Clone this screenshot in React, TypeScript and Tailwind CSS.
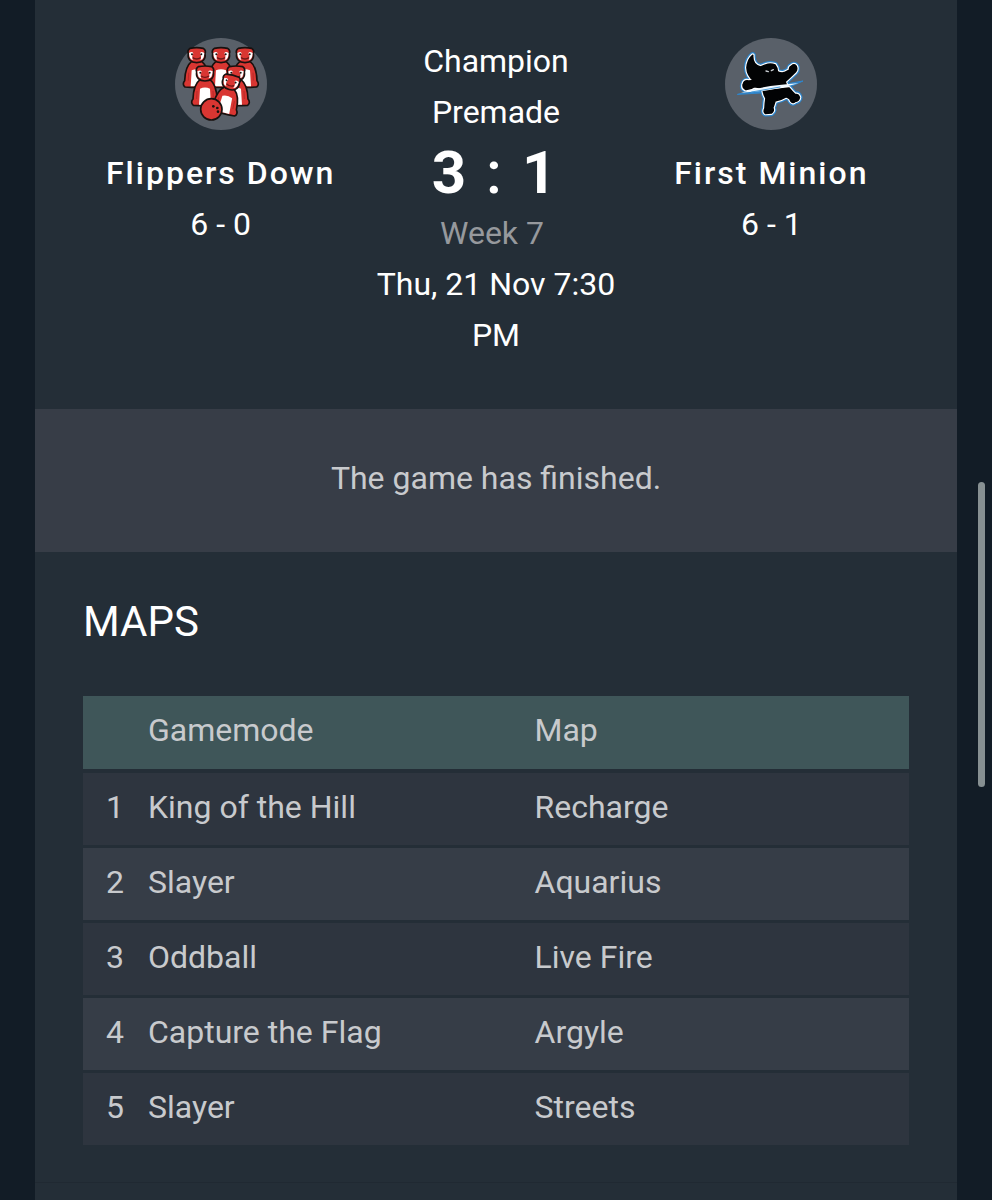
import type { ReactNode } from 'react';

interface Team {
  name: string;
  record: string;
  logo: ReactNode;
}

interface MapEntry {
  mode: string;
  map: string;
}

const maps: MapEntry[] = [
  { mode: 'King of the Hill', map: 'Recharge' },
  { mode: 'Slayer', map: 'Aquarius' },
  { mode: 'Oddball', map: 'Live Fire' },
  { mode: 'Capture the Flag', map: 'Argyle' },
  { mode: 'Slayer', map: 'Streets' },
];

// back row, middle row, then the front penguin
const penguins = [
  { x: 95, y: 54, tilt: 0 },
  { x: 168, y: 54, tilt: 0 },
  { x: 240, y: 54, tilt: 0 },
  { x: 213, y: 109, tilt: 0 },
  { x: 120, y: 109, tilt: 0 },
  { x: 203, y: 136, tilt: 14 },
];

function Penguin() {
  return (
    <g strokeLinejoin="round">
      <path
        d="M-15 40 C-28 50 -35 66 -36 98 C-41 104 -42 112 -35 117 L-17 118 L17 118 L35 117 C42 112 41 104 36 98 C35 66 28 50 15 40 Z"
        fill="#d93632"
        stroke="#18110f"
        strokeWidth="5"
      />
      <path d="M-15 67 Q0 60 15 67 L18 115 L-18 115 Z" fill="#ffffff" />
      <path d="M-24 74 L-25 98 M24 74 L25 98" stroke="#a92324" strokeWidth="2" fill="none" />
      <path
        d="M-20 1 Q0 -3 20 1 Q29 7 25 17 C28 34 17 44 0 44 C-17 44 -28 34 -25 17 Q-29 7 -20 1 Z"
        fill="#d93632"
        stroke="#18110f"
        strokeWidth="5"
      />
      <path d="M-23 15 Q-13 9 -10 16 Q-16 25 -11 36 Q-22 36 -23 15 Z" fill="#ffffff" />
      <path d="M23 15 Q13 9 10 16 Q16 25 11 36 Q22 36 23 15 Z" fill="#ffffff" />
      <circle cx="-14" cy="19" r="3" fill="#18110f" />
      <circle cx="14" cy="19" r="3" fill="#18110f" />
      <path d="M-12 29 Q0 37 12 29" stroke="#6d1717" strokeWidth="4" fill="none" />
    </g>
  );
}

function FlippersLogo() {
  return (
    <svg viewBox="30 24 276 276" className="size-23" role="img" aria-label="Flippers Down logo">
      <circle cx="168" cy="162" r="138" fill="#596069" />
      {penguins.map((p, i) => (
        <g key={i} transform={`translate(${p.x} ${p.y}) rotate(${p.tilt})`}>
          <Penguin />
        </g>
      ))}
      <circle cx="139" cy="238" r="32" fill="#d93632" stroke="#18110f" strokeWidth="5" />
      <circle cx="145" cy="229" r="4" fill="#18110f" />
      <circle cx="157" cy="234" r="4" fill="#18110f" />
      <circle cx="159" cy="245" r="4" fill="#18110f" />
    </svg>
  );
}

const minionTop =
  'M113 76 C112 94 120 108 137 111 L152 105 Q166 100 180 105 Q187 114 187 125 Q198 131 208 128 L224 120 Q222 112 230 108 Q237 101 243 108 Q248 118 241 126 L224 142 Q214 151 210 155 L214 165 L150 175 L118 170 Q107 179 91 178 Q82 174 85 163 Q88 150 101 153 L117 152 Q97 137 96 113 Q98 88 113 76 Z';
const minionBottom =
  'M145 183 L222 174 Q231 185 240 194 Q250 192 253 202 Q252 212 240 214 Q234 222 227 212 Q226 204 213 200 Q198 209 180 213 Q176 226 173 234 Q178 242 169 249 L151 250 Q145 245 150 235 Q151 216 153 205 Q146 193 145 183 Z';

function MinionLogo() {
  return (
    <svg viewBox="30 24 276 276" className="size-23" role="img" aria-label="First Minion logo">
      <circle cx="168" cy="162" r="138" fill="#596069" />
      <g strokeLinejoin="round" strokeLinecap="round">
        <g fill="none" stroke="#2f86cc" strokeWidth="19">
          <path d={minionTop} />
          <path d={minionBottom} />
        </g>
        <path d="M68 193 L150 173 L264 153 L222 172 L150 188 Z" fill="#2f86cc" stroke="#2f86cc" strokeWidth="3" />
        <g fill="#020304" stroke="#ffffff" strokeWidth="12">
          <path d={minionTop} />
          <path d={minionBottom} />
        </g>
        <g fill="#020304" stroke="#020304" strokeWidth="5">
          <path d={minionTop} />
          <path d={minionBottom} />
        </g>
        <path d="M78 188 Q150 166 250 160 Q200 176 150 182 Z" fill="#f2faff" />
        <path d="M110 186 L195 171" stroke="#4d9fdc" strokeWidth="3" />
        <path d="M153 123 L160 125 M169 122 L175 119" stroke="#c9ced2" strokeWidth="4" />
      </g>
    </svg>
  );
}

const home: Team = { name: 'Flippers Down', record: '6 - 0', logo: <FlippersLogo /> };
const away: Team = { name: 'First Minion', record: '6 - 1', logo: <MinionLogo /> };

function TeamColumn({ team }: { team: Team }) {
  return (
    <div className="flex flex-col items-center">
      {team.logo}
      <h2 className="mt-[18px] font-medium tracking-[2px]">{team.name}</h2>
      <p>{team.record}</p>
    </div>
  );
}

export default function App() {
  return (
    <div className="relative min-h-screen bg-[#121c26] px-[35px] font-['Roboto',sans-serif] text-[32px] leading-[51px] text-white">
      <main className="min-h-screen bg-[#242e37]">
        <section className="grid grid-cols-3 px-12 pt-[38px] pb-12 text-center">
          <TeamColumn team={home} />
          <div className="-mt-0.5 px-3">
            <p>Champion Premade</p>
            <p className="flex justify-center gap-5 pr-1 text-[60px] leading-[70px] font-bold">
              <span>3</span>
              <span className="font-medium">:</span>
              <span>1</span>
            </p>
            <p className="pr-2 text-[#96999d]">Week 7</p>
            <p>Thu, 21 Nov 7:30 PM</p>
          </div>
          <TeamColumn team={away} />
        </section>

        <p className="bg-[#373d47] pt-11 pb-12 text-center text-[#c8cacd]">The game has finished.</p>

        <section className="border-b border-[#202932] px-12 pt-11 pb-[34px]">
          <h1 className="text-[42px]">MAPS</h1>
          <table className="mt-[49px] w-full table-fixed border-collapse text-left text-[#c8cacd]">
            <thead>
              <tr className="h-[75px] border-b-4 border-[#242e37] bg-[#3f5659]">
                <th className="w-[53px]" aria-label="Number" />
                <th className="px-3 pb-1 font-normal">Gamemode</th>
                <th className="px-3 pb-1 font-normal">Map</th>
              </tr>
            </thead>
            <tbody>
              {maps.map((entry, i) => (
                <tr key={i} className="h-[75px] border-b-3 border-[#242e37] odd:bg-[#2e353f] even:bg-[#363d47]">
                  <td className="pr-3 pb-0.5 text-right">{i + 1}</td>
                  <td className="px-3 pb-0.5">{entry.mode}</td>
                  <td className="px-3 pb-0.5">{entry.map}</td>
                </tr>
              ))}
            </tbody>
          </table>
        </section>
      </main>

      {/* scroll indicator */}
      <div className="absolute top-[482px] right-[7px] h-[305px] w-[7px] rounded-full bg-[#879092]" />
    </div>
  );
}
